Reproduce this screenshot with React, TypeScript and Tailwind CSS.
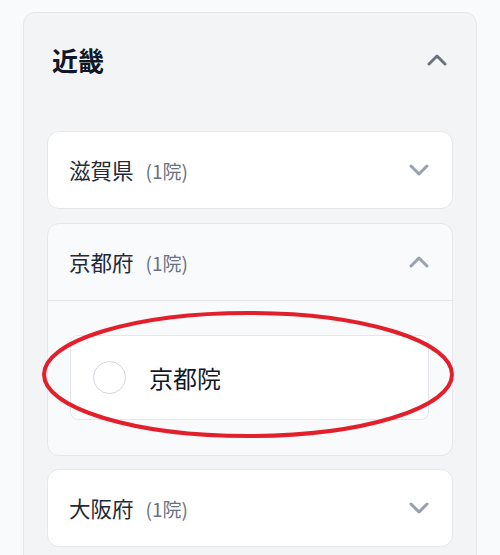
import React from "react";

const font = { fontFamily: '"Noto Sans CJK JP", "Noto Sans", sans-serif' };

function Chevron({ up, className }: { up?: boolean; className?: string }) {
  return (
    <svg width="20" height="12" viewBox="0 0 20 12" className={className} aria-hidden>
      <polyline
        points={up ? "2,10 10,2 18,10" : "2,2 10,10 18,2"}
        fill="none"
        stroke="currentColor"
        strokeWidth="3"
        strokeLinecap="round"
        strokeLinejoin="round"
      />
    </svg>
  );
}

function PrefHeader({ name, count, open }: { name: string; count: number; open?: boolean }) {
  return (
    <div className="flex h-[76px] items-center justify-between pl-[21px] pr-[23px]">
      <p className="flex items-center leading-none">
        <span className="text-[21.5px] text-gray-800">{name}</span>
        <span className="ml-[12px] text-[19px] text-gray-500">({count}院)</span>
      </p>
      <Chevron up={open} className="text-gray-400" />
    </div>
  );
}

export default function App() {
  return (
    <div style={font} className="relative min-h-screen bg-[#f9fafb] px-[23px] pt-3">
      <section className="rounded-xl border border-gray-200 bg-gray-100 pb-6">
        <div className="flex h-[94px] items-center justify-between pl-7 pr-[29px]">
          <h2 className="text-[26px] font-bold leading-none text-gray-900">近畿</h2>
          <Chevron up className="text-gray-500" />
        </div>

        <div className="flex flex-col gap-[13px] px-[23px] pt-6">
          <div className="rounded-xl border border-gray-200 bg-white">
            <PrefHeader name="滋賀県" count={1} />
          </div>

          <div className="mt-px rounded-xl border border-gray-200 bg-[#f9fafb]">
            <div className="border-b border-gray-200">
              <PrefHeader name="京都府" count={1} open />
            </div>
            <div className="pb-[35px] pl-[22px] pr-[23px] pt-[34px]">
              <div className="flex h-[85px] items-center gap-[23px] rounded-lg border border-gray-200 bg-white pl-[22px]">
                <span className="h-[33px] w-[33px] shrink-0 rounded-full border-[1.5px] border-gray-300 bg-white" />
                <span className="text-[24px] leading-none text-gray-900">京都院</span>
              </div>
            </div>
          </div>

          <div className="rounded-xl border border-gray-200 bg-white">
            <PrefHeader name="大阪府" count={1} />
          </div>
        </div>
      </section>

      {/* red annotation ring around the clinic row */}
      <svg
        className="pointer-events-none absolute left-0 top-0"
        width="500"
        height="555"
        viewBox="0 0 500 555"
        aria-hidden
      >
        <ellipse cx="248" cy="374.5" rx="204" ry="61.5" fill="none" stroke="#e2202b" strokeWidth="4" />
      </svg>
    </div>
  );
}
